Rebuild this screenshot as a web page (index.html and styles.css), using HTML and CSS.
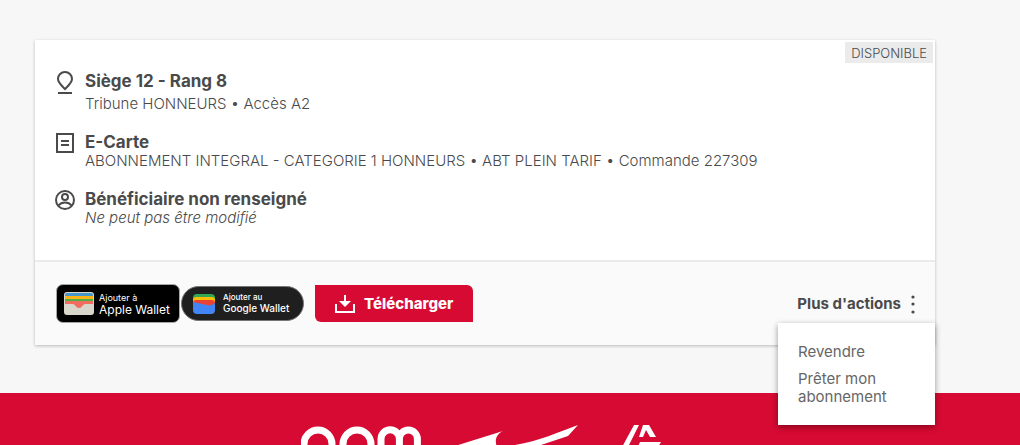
FILE: index.html
```html
<!DOCTYPE html>
<html lang="fr">
<head>
    <meta charset="UTF-8">
    <meta name="viewport" content="width=device-width, initial-scale=1.0">
    <title>Mes abonnements</title>
    <link rel="stylesheet" href="styles.css">
</head>
<body>
    <main>
        <article class="card">
            <div class="card-body">
                <span class="status">DISPONIBLE</span>
                <section class="info info-seat">
                    <svg class="info-icon" viewBox="0 0 20 24" fill="none" stroke="#4a4a4a" stroke-width="2">
                        <path d="M10 18C6 14 3 11.500 3 8a7 7 0 0 1 14 0c0 3.500-3 6-7 10z"/>
                        <path d="M3 22h14"/>
                    </svg>
                    <div>
                        <h2>Siège 12 - Rang 8</h2>
                        <p>Tribune HONNEURS • Accès A2</p>
                    </div>
                </section>
                <section class="info">
                    <svg class="info-icon" viewBox="0 0 20 24" fill="none" stroke="#4a4a4a" stroke-width="2">
                        <path d="M2 2h16v18H2zM6 9h8M6 13h8"/>
                    </svg>
                    <div>
                        <h2>E-Carte</h2>
                        <p>ABONNEMENT INTEGRAL - CATEGORIE 1 HONNEURS • ABT PLEIN TARIF • Commande 227309</p>
                    </div>
                </section>
                <section class="info">
                    <svg class="info-icon" viewBox="0 0 20 24" fill="none" stroke="#4a4a4a" stroke-width="2">
                        <circle cx="10" cy="11" r="9"/>
                        <circle cx="10" cy="8" r="3"/>
                        <path d="M3.500 16.500c1.500-2 4-3 6.500-3s5 1 6.500 3"/>
                    </svg>
                    <div>
                        <h2>Bénéficiaire non renseigné</h2>
                        <p class="note">Ne peut pas être modifié</p>
                    </div>
                </section>
            </div>
            <div class="card-actions">
                <button class="wallet apple" type="button">
                    <svg class="apple-icon" viewBox="0 0 30 23">
                        <rect width="30" height="23" rx="3" fill="#d9d6cb"/>
                        <path d="M1 5V3a2 2 0 0 1 2-2h24a2 2 0 0 1 2 2v2z" fill="#4596cd"/>
                        <path d="M1 4h28v4H1z" fill="#fbb416"/>
                        <path d="M1 7h28v4H1z" fill="#4fae48"/>
                        <path d="M1 9h28v3h-8c-2 0-3 4-6 4s-4-4-6-4H1z" fill="#f26d5f"/>
                    </svg>
                    <span><small>Ajouter à</small>Apple Wallet</span>
                </button>
                <button class="wallet google" type="button">
                    <svg class="google-icon" viewBox="0 0 22 20">
                        <path d="M0 8V4a4 4 0 0 1 4-4h14a4 4 0 0 1 4 4v4z" fill="#34a853"/>
                        <path d="M0 11V6a3 3 0 0 1 3-3h16a3 3 0 0 1 3 3v5z" fill="#fbbc04"/>
                        <path d="M0 13V9a3 3 0 0 1 3-3h16a3 3 0 0 1 3 3v5z" fill="#ea4335"/>
                        <path d="M0 8l14 3c3 1 5 0 8-2v7a4 4 0 0 1-4 4H4a4 4 0 0 1-4-4z" fill="#4285f4"/>
                    </svg>
                    <span><small>Ajouter au</small>Google Wallet</span>
                </button>
                <button class="download" type="button">
                    <svg class="download-icon" viewBox="0 0 20 20" fill="none" stroke="#fff" stroke-width="2">
                        <path d="M1 10v8h18v-8M10 1v8"/>
                        <path d="M4 7h12l-6 6z" fill="#fff" stroke="none"/>
                    </svg>
                    Télécharger
                </button>
                <div class="more">
                    <button class="more-toggle" type="button" aria-expanded="true">
                        Plus d'actions
                        <svg class="dots" viewBox="0 0 4 20" fill="#4a4a4a">
                            <circle cx="2" cy="3" r="1.600"/>
                            <circle cx="2" cy="10" r="1.600"/>
                            <circle cx="2" cy="18" r="1.600"/>
                        </svg>
                    </button>
                    <nav class="menu">
                        <a href="#">Revendre</a>
                        <a href="#">Prêter mon abonnement</a>
                    </nav>
                </div>
            </div>
        </article>
    </main>
    <footer>
        <svg class="logo-round" viewBox="0 0 120 40" fill="none" stroke="#fff" stroke-width="7">
            <circle cx="17" cy="19" r="14"/>
            <circle cx="56" cy="19" r="14"/>
            <path d="M80 40V14a9.200 9.200 0 0 1 18.400 0v26M98.400 40V14a9 9 0 0 1 18 0v26"/>
        </svg>
        <svg class="logo-wing" viewBox="0 0 124 40" fill="#fff">
            <path d="M0 21L48 6c-6 3-9 8-6 16H0z"/>
            <path d="M60 20C84 16 104 7 123 0l-10 11-27 9-10 4H48z"/>
        </svg>
        <svg class="logo-club" viewBox="0 0 56 40" fill="#fff">
            <path d="M21 0h5L14 24H8zM30 0h6l7 12h-6l-4-7-3 7h-4zM27 17h21l-4 7h-9l3-4h-7l-2 4h-5z"/>
        </svg>
    </footer>
</body>
</html>
```
FILE: styles.css
```css
* {
    box-sizing: border-box;
}

body {
    margin: 0;
    height: 100vh;
    display: flex;
    flex-direction: column;
    background-color: #f7f7f7;
    color: #4a4a4a;
    font-family: Inter, "Open Sans", sans-serif;
    font-size: 15px;
    line-height: 18px;
}

button {
    border: none;
    background: none;
    color: inherit;
    font-family: inherit;
    cursor: pointer;
}

main {
    padding: 40px 85px 48px 35px;
}

.card {
    background-color: #fff;
    box-shadow: 0 1px 3px rgba(0, 0, 0, 0.25);
}

.card-body {
    position: relative;
    display: flex;
    flex-direction: column;
    gap: 19px;
    padding: 31px 20px 33px;
    border-bottom: 2px solid #ebebeb;
}

.status {
    position: absolute;
    top: 2px;
    right: 2px;
    padding: 2px 6px 1px;
    background-color: #ebebeb;
    font-size: 13px;
    font-weight: 300;
}

/* Seat, card and beneficiary lines */
.info {
    display: flex;
    gap: 10px;
}

.info-icon {
    flex: none;
    width: 20px;
    height: 24px;
}

.info h2 {
    margin: 0;
    font-size: 17px;
    font-weight: 700;
    line-height: 20px;
}

.info p {
    margin: 0;
    font-weight: 300;
}

.info-seat p {
    margin-top: 4px;
}

.info .note {
    font-style: italic;
}

/* Buttons row */
.card-actions {
    display: flex;
    align-items: center;
    padding: 22px 20px 22px 21px;
    background-color: #fafafa;
}

.wallet {
    display: flex;
    align-items: center;
    border: 1px solid #a6a6a6;
    color: #fff;
    font-family: Inter, sans-serif;
    text-align: left;
}

.wallet small {
    display: block;
}

.apple {
    width: 124px;
    height: 39px;
    gap: 5px;
    padding: 0 7px;
    border-radius: 7px;
    background-color: #000;
    font-size: 12px;
    line-height: 13px;
}

.wallet span {
    white-space: nowrap;
}

.apple small {
    font-size: 9px;
    line-height: 11px;
}

.apple-icon {
    flex: none;
    width: 30px;
    height: 23px;
}

.google {
    width: 123px;
    height: 35px;
    gap: 8px;
    margin-left: 1px;
    padding: 0 11px;
    border-color: #747775;
    border-radius: 18px;
    background-color: #1f1f1f;
    font-size: 10px;
    font-weight: 500;
    line-height: 13px;
}

.google small {
    font-size: 8px;
    line-height: 10px;
}

.google-icon {
    flex: none;
    width: 22px;
    height: 20px;
}

.download {
    display: flex;
    align-items: center;
    gap: 9px;
    height: 37px;
    margin-left: 11px;
    padding: 0 20px;
    border-radius: 0 6px;
    background-color: #d60a32;
    color: #fff;
    font-size: 15px;
    font-weight: 800;
}

.download-icon {
    width: 20px;
    height: 20px;
}

.more {
    position: relative;
    margin-left: auto;
}

.more-toggle {
    display: flex;
    align-items: center;
    gap: 10px;
    padding: 0;
    font-size: 15px;
    font-weight: 700;
}

.dots {
    width: 4px;
    height: 20px;
}

.menu {
    position: absolute;
    top: 29px;
    right: -20px;
    z-index: 1;
    width: 157px;
    padding: 20px 20px 19px;
    background-color: #fff;
    box-shadow: 0 2px 6px rgba(0, 0, 0, 0.4);
}

.menu a {
    display: block;
    color: #666;
    text-decoration: none;
}

.menu a + a {
    margin-top: 9px;
}

footer {
    flex: 1;
    min-height: 0;
    display: flex;
    justify-content: center;
    gap: 34px;
    padding: 32px 85px 0 35px;
    background-color: #d60a32;
    overflow: hidden;
}

footer svg {
    flex: none;
    height: 40px;
}

.logo-round {
    width: 120px;
}

.logo-wing {
    width: 124px;
}

.logo-club {
    width: 56px;
}
```
